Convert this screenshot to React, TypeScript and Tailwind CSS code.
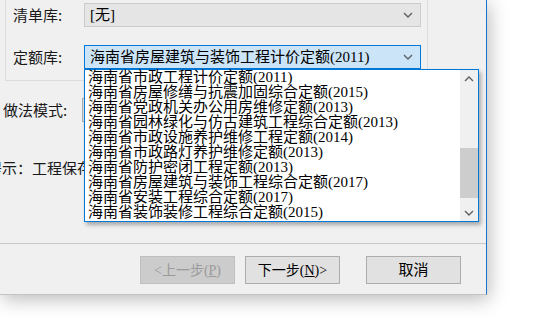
import React from 'react';

const items = [
  '海南省市政工程计价定额(2011)',
  '海南省房屋修缮与抗震加固综合定额(2015)',
  '海南省党政机关办公用房维修定额(2013)',
  '海南省园林绿化与仿古建筑工程综合定额(2013)',
  '海南省市政设施养护维修工程定额(2014)',
  '海南省市政路灯养护维修定额(2013)',
  '海南省防护密闭工程定额(2013)',
  '海南省房屋建筑与装饰工程综合定额(2017)',
  '海南省安装工程综合定额(2017)',
  '海南省装饰装修工程综合定额(2015)',
];

const uiFont = "font-['Noto_Sans_CJK_SC',sans-serif]";
const fieldFont = "font-['Liberation_Serif','Noto_Sans_CJK_SC',serif]";

function Chevron({ up = false }: { up?: boolean }) {
  return (
    <svg width="10" height="6" viewBox="0 0 10 6" className={up ? 'rotate-180' : ''}>
      <polyline points="1,1 5,5 9,1" fill="none" stroke="#606060" strokeWidth="1.4" />
    </svg>
  );
}

function Combo({ text, focused = false }: { text: string; focused?: boolean }) {
  return (
    <div
      className={`flex h-[24px] w-[337px] items-center border pl-[5px] pr-[7px] ${
        focused ? 'border-[#0078d7] bg-[#cce4f7]' : 'border-[#cccccc] bg-[#e5e5e5]'
      }`}
    >
      <span className={`flex-1 text-[15px] leading-[15px] text-black ${fieldFont}`}>{text}</span>
      <Chevron />
    </div>
  );
}

export default function App() {
  return (
    <div className="relative h-[318px] w-[539px] overflow-hidden bg-white">
      <div
        className={`flex h-[295px] w-[487px] flex-col border-r border-b border-r-[#1a73d0] border-b-[#c4c4c4] bg-[#f0f0f0] shadow-[2px_4px_18px_rgba(0,0,0,0.28)] ${uiFont}`}
      >
        {/* group box */}
        <div className="ml-[5px] flex h-[81px] w-[423px] flex-col gap-[18px] border-x border-b border-[#dcdcdc] pl-[7px] pt-[3px]">
          <div className="flex items-center">
            <span className="w-[71px] text-[15px] text-[#1a1a1a]">清单库:</span>
            <Combo text="[无]" />
          </div>
          <div className="flex items-center">
            <span className="w-[71px] text-[15px] text-[#1a1a1a]">定额库:</span>
            <Combo text="海南省房屋建筑与装饰工程计价定额(2011)" focused />
          </div>
        </div>

        <div className="mt-[17px] flex h-[24px] items-center">
          <span className="w-[82px] pl-[3px] text-[15px] text-[#1a1a1a]">做法模式:</span>
          <div className="h-[24px] w-[339px] border border-[#adadad] bg-[#e5e5e5]" />
        </div>

        <div className="mt-[33px] h-[20px] overflow-hidden">
          <span className="ml-[-13px] whitespace-nowrap text-[15px] leading-[20px] text-[#1a1a1a]">
            提示：工程保存位置为默认路径
          </span>
        </div>

        <div className="mt-auto border-t border-[#c8c8c8] pt-[12px] pb-[10px]">
          <div className="flex justify-end gap-[10px] pr-[25px]">
            <button className={`h-[28px] w-[95px] border border-[#bfbfbf] bg-[#cccccc] text-[14px] text-[#9a9a9a] ${fieldFont}`}>
              &lt;上一步(<span className="underline">P</span>)
            </button>
            <button className={`h-[28px] w-[95px] border border-[#adadad] bg-[#e1e1e1] text-[14px] text-black ${fieldFont}`}>
              下一步(<span className="underline">N</span>)&gt;
            </button>
            <button className={`ml-[16px] h-[28px] w-[95px] border border-[#adadad] bg-[#e1e1e1] text-[15px] text-black ${fieldFont}`}>
              取消
            </button>
          </div>
        </div>
      </div>

      {/* open dropdown list */}
      <div className="absolute left-[84px] top-[69px] flex h-[153px] w-[395px] border border-[#0078d7] bg-white shadow-[2px_3px_4px_rgba(0,0,0,0.3)]">
        <div className="flex-1 pl-[3px]">
          {items.map((item) => (
            <div key={item} className={`h-[15px] whitespace-nowrap text-[15px] leading-[15px] text-black ${fieldFont}`}>
              {item}
            </div>
          ))}
        </div>
        <div className="flex w-[18px] flex-col bg-[#f0f0f0]">
          <div className="flex h-[17px] items-center justify-center">
            <Chevron up />
          </div>
          <div className="mt-[61px] h-[50px] bg-[#cdcdcd]" />
          <div className="mt-auto flex h-[17px] items-center justify-center">
            <Chevron />
          </div>
        </div>
      </div>
    </div>
  );
}
